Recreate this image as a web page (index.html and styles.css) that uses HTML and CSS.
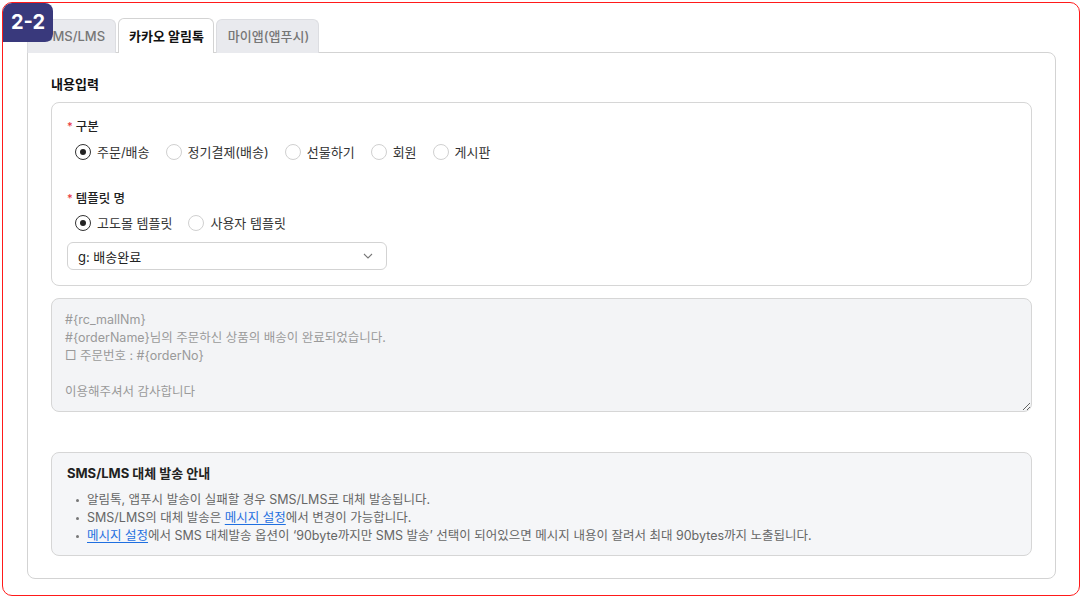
FILE: index.html
```html
<!DOCTYPE html>
<html lang="ko">
<head>
<meta charset="utf-8">
<link rel="stylesheet" href="styles.css">
</head>
<body>
<div class="frame">
  <div class="badge">2-2</div>
  <div class="tabs">
    <div class="tab">SMS/LMS</div>
    <div class="tab active">카카오 알림톡</div>
    <div class="tab">마이앱(앱푸시)</div>
  </div>
  <div class="panel">
    <h3 class="section-title">내용입력</h3>
    <div class="box">
      <div class="field">
        <div class="label"><span class="req">*</span>구분</div>
        <div class="radios">
          <label class="radio"><span class="dot checked"></span>주문/배송</label>
          <label class="radio"><span class="dot"></span>정기결제(배송)</label>
          <label class="radio"><span class="dot"></span>선물하기</label>
          <label class="radio"><span class="dot"></span>회원</label>
          <label class="radio"><span class="dot"></span>게시판</label>
        </div>
      </div>
      <div class="field second">
        <div class="label"><span class="req">*</span>템플릿 명</div>
        <div class="radios">
          <label class="radio"><span class="dot checked"></span>고도몰 템플릿</label>
          <label class="radio"><span class="dot"></span>사용자 템플릿</label>
        </div>
        <div class="select">
          <span>g: 배송완료</span>
          <svg class="chev" width="10" height="6" viewBox="0 0 10 6"><path d="M1 1l4 4 4-4" fill="none" stroke="#777" stroke-width="1.1"/></svg>
        </div>
      </div>
    </div>
    <textarea class="message" readonly>#{rc_mallNm}
#{orderName}님의 주문하신 상품의 배송이 완료되었습니다.
□ 주문번호 : #{orderNo}

이용해주셔서 감사합니다</textarea>
    <div class="notice">
      <div class="notice-title">SMS/LMS 대체 발송 안내</div>
      <ul class="notice-list">
        <li>알림톡, 앱푸시 발송이 실패할 경우 SMS/LMS로 대체 발송됩니다.</li>
        <li>SMS/LMS의 대체 발송은 <a href="#">메시지 설정</a>에서 변경이 가능합니다.</li>
        <li><a href="#">메시지 설정</a>에서 SMS 대체발송 옵션이 ‘90byte까지만 SMS 발송’ 선택이 되어있으면 메시지 내용이 잘려서 최대 90bytes까지 노출됩니다.</li>
      </ul>
    </div>
  </div>
</div>
</body>
</html>
```
FILE: styles.css
```css
* { box-sizing: border-box; }
html, body { margin: 0; padding: 0; background: #fff; }
body {
  font-family: "Inter", "Noto Sans CJK KR", sans-serif;
  font-size: 13px;
  color: #222;
}
.frame {
  position: relative;
  margin: 2px 2px 0 2px;
  height: 594px;
  border: 1px solid #ff1a1a;
  border-radius: 10px;
  padding: 15px 23px 0 24px;
}
.badge {
  position: absolute;
  left: 0;
  top: 0;
  width: 50px;
  height: 39px;
  background: #39397c;
  color: #fff;
  font-weight: 700;
  font-size: 20px;
  line-height: 39px;
  text-align: center;
  border-radius: 9px 8px 8px 0;
  z-index: 2;
}
.tabs {
  display: flex;
  gap: 2px;
  height: 35px;
  position: relative;
  z-index: 1;
  margin-bottom: -1px;
}
.tab {
  height: 34px;
  margin-top: 1px;
  padding: 0 9px 0 11px;
  background: #e9eaee;
  border: 1px solid #dcdde1;
  border-bottom: none;
  border-radius: 6px 6px 0 0;
  color: #777;
  font-weight: 500;
  font-size: 13px;
  line-height: 33px;
  white-space: nowrap;
}
.tab:first-child { width: 89px; padding-left: 16px; }
.tab.active {
  height: 35px;
  margin-top: 0;
  background: #fff;
  border-color: #d3d3d3;
  color: #111;
  font-weight: 700;
  padding: 0 9px 0 10px;
  line-height: 34px;
}
.panel {
  border: 1px solid #d3d3d3;
  border-radius: 0 8px 8px 8px;
  height: 527px;
  padding: 22px 23px 0 23px;
}
.section-title {
  margin: 0;
  font-size: 13px;
  font-weight: 700;
  line-height: 18px;
  color: #111;
}
.box {
  margin-top: 9px;
  border: 1px solid #d6d6d6;
  border-radius: 8px;
  padding: 14px 15px 15px 15px;
}
.field.second { margin-top: 27px; }
.label {
  font-size: 12.5px;
  line-height: 18px;
  font-weight: 500;
  color: #222;
}
.req {
  color: #e8323c;
  font-size: 11px;
  margin-right: 3px;
  vertical-align: 1px;
}
.radios {
  display: flex;
  gap: 16px;
  margin-top: 6px;
  padding-left: 8px;
  height: 20px;
  align-items: center;
}
.field.second .radios { margin-top: 5px; }
.radio {
  display: flex;
  align-items: center;
  gap: 6px;
  font-size: 13px;
  color: #333;
  line-height: 20px;
}
.dot {
  width: 16px;
  height: 16px;
  border-radius: 50%;
  border: 1px solid #d0d0d0;
  display: inline-flex;
  align-items: center;
  justify-content: center;
  background: #fff;
}
.dot.checked { border: 1.5px solid #333; }
.dot.checked::after {
  content: "";
  width: 6px;
  height: 6px;
  border-radius: 50%;
  background: #222;
}
.select {
  margin-top: 9px;
  width: 320px;
  height: 28px;
  border: 1px solid #d3d3d3;
  border-radius: 6px;
  display: flex;
  align-items: center;
  justify-content: space-between;
  padding: 0 13px 0 10px;
  font-size: 13px;
  color: #222;
}
.message {
  display: block;
  margin-top: 12px;
  width: 100%;
  height: 114px;
  background: #f3f4f6;
  border: 1px solid #d6d6d6;
  border-radius: 8px;
  padding: 12px 13px 6px 13px;
  font-family: "Inter", "Noto Sans CJK KR", sans-serif;
  font-size: 12.5px;
  line-height: 18px;
  color: #9a9a9a;
  resize: vertical;
  outline: none;
}
.notice {
  margin-top: 40px;
  background: #f5f6f8;
  border: 1px solid #d6d6d6;
  border-radius: 8px;
  padding: 11px 15px 10px 15px;
}
.notice-title {
  font-size: 13px;
  font-weight: 700;
  line-height: 18px;
  color: #222;
}
.notice-list {
  margin: 9px 0 0 0;
  padding: 0 0 0 20px;
  list-style: none;
}
.notice-list li {
  position: relative;
  font-size: 12.5px;
  line-height: 18px;
  color: #666;
}
.notice-list li::before {
  content: "";
  position: absolute;
  left: -11px;
  top: 8px;
  width: 3px;
  height: 3px;
  border-radius: 50%;
  background: #777;
}
.notice-list a {
  color: #1f6fe0;
  text-decoration: underline;
  text-underline-offset: 2px;
}
```
